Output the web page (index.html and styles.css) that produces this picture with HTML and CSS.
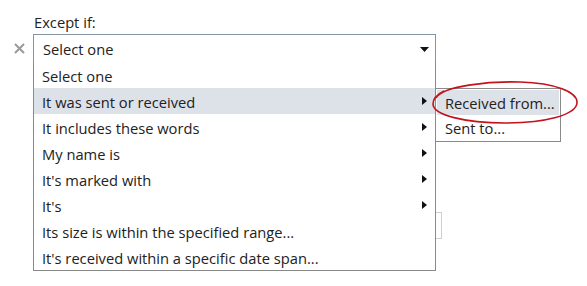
FILE: index.html
```html
<html>
  <head>
    <meta charset="utf-8" />
    <title>Except if</title>
    <link rel="stylesheet" href="styles.css">
  </head>
  <body>
    <div class="page">
      <div class="gutter"></div>
      <div class="label">Except if:</div>

      <div class="remove">
        <svg width="11" height="11" viewBox="0 0 11 11">
          <path d="M1 1 L10 10 M10 1 L1 10" stroke="#9a9a9a" stroke-width="2" />
        </svg>
      </div>
      <div class="select-wrap">
        <div class="select">
          <span>Select one</span>
          <svg class="caret" width="9" height="5" viewBox="0 0 9 5">
            <path d="M0 0 H9 L4.5 5 Z" fill="#111" />
          </svg>
        </div>

        <ul class="menu">
          <li>Select one</li>
          <li class="active has-sub">
            It was sent or received
            <ul class="submenu">
              <li class="active">Received from...</li>
              <li>Sent to...</li>
            </ul>
            <svg class="ring" width="150" height="46" viewBox="0 0 150 46">
              <path d="M6 18 C12 6 60 1 90 2 C125 3 148 12 147 23 C146 35 115 43 75 43 C35 43 3 35 3 24 C3 18 8 14 14 11"
                fill="none" stroke="#c4121c" stroke-width="1.6" />
            </svg>
          </li>
          <li class="has-sub">It includes these words</li>
          <li class="has-sub">My name is</li>
          <li class="has-sub">It's marked with</li>
          <li class="has-sub">It's</li>
          <li>Its size is within the specified range...</li>
          <li>It's received within a specific date span...</li>
        </ul>
      </div>

      <div class="gutter"></div>
      <div class="under">
        <div class="textbox"></div>
      </div>
    </div>
  </body>
</html>
```

FILE: styles.css
```css
* {
  box-sizing: border-box;
  margin: 0;
  padding: 0;
}

body {
  background: #fff;
  color: #222;
  font-family: 'Open Sans', 'Noto Sans', sans-serif;
  font-size: 14.7px;
}

.page {
  display: grid;
  grid-template-columns: 33px 403px;
  padding-top: 12px;
}

.label {
  height: 22px;
  line-height: 21px;
  padding-left: 1px;
}

.remove {
  display: flex;
  justify-content: flex-end;
  align-items: center;
  padding-right: 8px;
}

.select-wrap {
  position: relative;
}

.select {
  height: 28px;
  border: 1px solid #8396a6;
  display: flex;
  align-items: center;
  justify-content: space-between;
  padding: 1px 6px 0 9px;
}

.caret {
  margin-top: 1px;
}

.menu {
  position: absolute;
  top: 27px;
  left: 0;
  width: 403px;
  list-style: none;
  background: #fff;
  border: 1px solid #8a8a8a;
  border-top: none;
  padding-top: 1px;
  z-index: 2;
}

.menu > li {
  position: relative;
  height: 26px;
  line-height: 28px;
  padding-left: 8px;
}

.menu li.active {
  background: #dde1e8;
}

.menu > li.has-sub::after {
  content: '';
  position: absolute;
  right: 8px;
  top: 9px;
  border-left: 5px solid #111;
  border-top: 4px solid transparent;
  border-bottom: 4px solid transparent;
}

.submenu {
  position: absolute;
  left: 401px;
  top: 0;
  width: 126px;
  list-style: none;
  background: #fff;
  border: 1px solid #8a8a8a;
  padding: 1px 0 0 1px;
}

.submenu li {
  height: 26px;
  line-height: 26px;
  padding-left: 8px;
  background: #fff;
}

.submenu li.active {
  height: 25px;
  background: #dde1e8;
  margin-right: 1px;
}

.ring {
  position: absolute;
  left: 396px;
  top: -8px;
}

.under {
  padding-top: 150px;
}

.textbox {
  width: 409px;
  height: 27px;
  border: 1px solid #cfcfcf;
}
```
